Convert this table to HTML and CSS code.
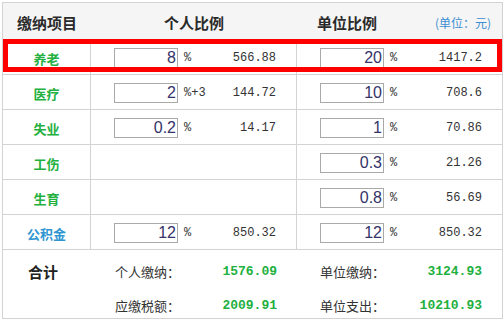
FILE: index.html
```html
<!DOCTYPE html>
<html lang="zh-CN">
<head>
<meta charset="utf-8">
<title>五险一金</title>
<link rel="stylesheet" href="styles.css">
</head>
<body>
<div class="sheet">
  <div class="row head">
    <div class="c1">缴纳项目</div>
    <div class="c2">个人比例</div>
    <div class="c3 head3"><span>单位比例</span><span class="unit">(单位：元)</span></div>
  </div>

  <div class="row">
    <div class="c1 name">养老</div>
    <div class="c2 cell"><input class="num" value="8"><span class="pct">%</span><span class="amt">566.88</span></div>
    <div class="c3 cell"><input class="num" value="20"><span class="pct">%</span><span class="amt">1417.2</span></div>
  </div>

  <div class="row">
    <div class="c1 name">医疗</div>
    <div class="c2 cell"><input class="num" value="2"><span class="pct">%+3</span><span class="amt">144.72</span></div>
    <div class="c3 cell"><input class="num" value="10"><span class="pct">%</span><span class="amt">708.6</span></div>
  </div>

  <div class="row">
    <div class="c1 name">失业</div>
    <div class="c2 cell"><input class="num" value="0.2"><span class="pct">%</span><span class="amt">14.17</span></div>
    <div class="c3 cell"><input class="num" value="1"><span class="pct">%</span><span class="amt">70.86</span></div>
  </div>

  <div class="row">
    <div class="c1 name">工伤</div>
    <div class="c2 cell"></div>
    <div class="c3 cell"><input class="num" value="0.3"><span class="pct">%</span><span class="amt">21.26</span></div>
  </div>

  <div class="row">
    <div class="c1 name">生育</div>
    <div class="c2 cell"></div>
    <div class="c3 cell"><input class="num" value="0.8"><span class="pct">%</span><span class="amt">56.69</span></div>
  </div>

  <div class="row">
    <div class="c1 name fund">公积金</div>
    <div class="c2 cell"><input class="num" value="12"><span class="pct">%</span><span class="amt">850.32</span></div>
    <div class="c3 cell"><input class="num" value="12"><span class="pct">%</span><span class="amt">850.32</span></div>
  </div>

  <div class="sum">
    <div class="total">合计</div>
    <div class="pair p2"><span class="lbl">个人缴纳：</span><span class="val">1576.09</span></div>
    <div class="pair p3"><span class="lbl">单位缴纳：</span><span class="val">3124.93</span></div>
    <div class="pair p2"><span class="lbl">应缴税额：</span><span class="val">2009.91</span></div>
    <div class="pair p3"><span class="lbl">单位支出：</span><span class="val">10210.93</span></div>
  </div>

  <div class="highlight"></div>
</div>
</body>
</html>
```

FILE: styles.css
```css
html, body {
  margin: 0;
  padding: 0;
  background: #fff;
}

body {
  font-family: "Noto Sans CJK SC", "Liberation Sans", sans-serif;
  color: #333;
}

.sheet {
  position: relative;
  margin: 2px 0 0 2px;
  width: 501px;
  border: 1px solid #d3d3d3;
  box-sizing: border-box;
}

.row {
  display: grid;
  grid-template-columns: 88px 206px 205px;
  height: 35px;
  border-bottom: 1px solid #d3d3d3;
  box-sizing: border-box;
}

.row > div {
  display: flex;
  align-items: center;
  box-sizing: border-box;
}

.row .c1,
.row .c2 {
  border-right: 1px solid #d3d3d3;
}

.head {
  height: 37px;
  background: #f5f5f5;
  font-weight: bold;
  font-size: 15px;
  color: #2a2a2a;
}

.head .c1,
.head .c2 {
  border-right: 0;
  justify-content: center;
  padding-top: 2px;
}

.head3 {
  display: grid !important;
  grid-template-columns: 100px 1fr;
  align-items: center;
  padding-top: 2px;
}

.head3 > span:first-child {
  text-align: center;
}

.unit {
  font-weight: normal;
  font-size: 12px;
  color: #3b8fd2;
  text-align: right;
  padding-right: 11px;
}

.name {
  justify-content: center;
  font-size: 13px;
  font-weight: bold;
  color: #22b03e;
  padding-top: 2px;
}

.fund {
  color: #2f96d2;
}

.cell {
  padding: 2px 20px 0 23px;
}

.num {
  width: 64px;
  height: 20px;
  box-sizing: border-box;
  margin: 0 6px 0 0;
  padding: 0 1px 0 0;
  border: 1px solid #a9a9a9;
  background: #fff;
  text-align: right;
  font-family: "Liberation Sans", sans-serif;
  font-size: 16px;
  line-height: 18px;
  color: #34346a;
  outline: none;
}

.pct,
.amt {
  font-family: "Liberation Mono", monospace;
  font-size: 12px;
  color: #333;
}

.amt {
  margin-left: auto;
}

.sum {
  display: grid;
  grid-template-columns: 88px 206px 205px;
  grid-template-rows: 20px 20px;
  row-gap: 14px;
  padding: 11px 0 3px;
  height: 68px;
  box-sizing: border-box;
}

.total {
  grid-row: 1;
  grid-column: 1;
  display: flex;
  align-items: center;
  justify-content: center;
  padding-right: 8px;
  font-size: 15px;
  font-weight: bold;
  color: #222;
}

.pair {
  display: flex;
  align-items: center;
  justify-content: space-between;
}

.p2 {
  grid-column: 2;
  padding: 0 20px 0 24px;
}

.p3 {
  grid-column: 3;
  padding: 0 20px 0 23px;
}

.lbl {
  font-size: 13px;
  color: #333;
}

.val {
  font-family: "Liberation Mono", monospace;
  font-size: 13px;
  font-weight: bold;
  color: #22b03e;
}

.highlight {
  position: absolute;
  left: 0;
  top: 36px;
  width: 499px;
  height: 33px;
  border: 5px solid #ff0000;
  box-sizing: border-box;
  pointer-events: none;
}
```
